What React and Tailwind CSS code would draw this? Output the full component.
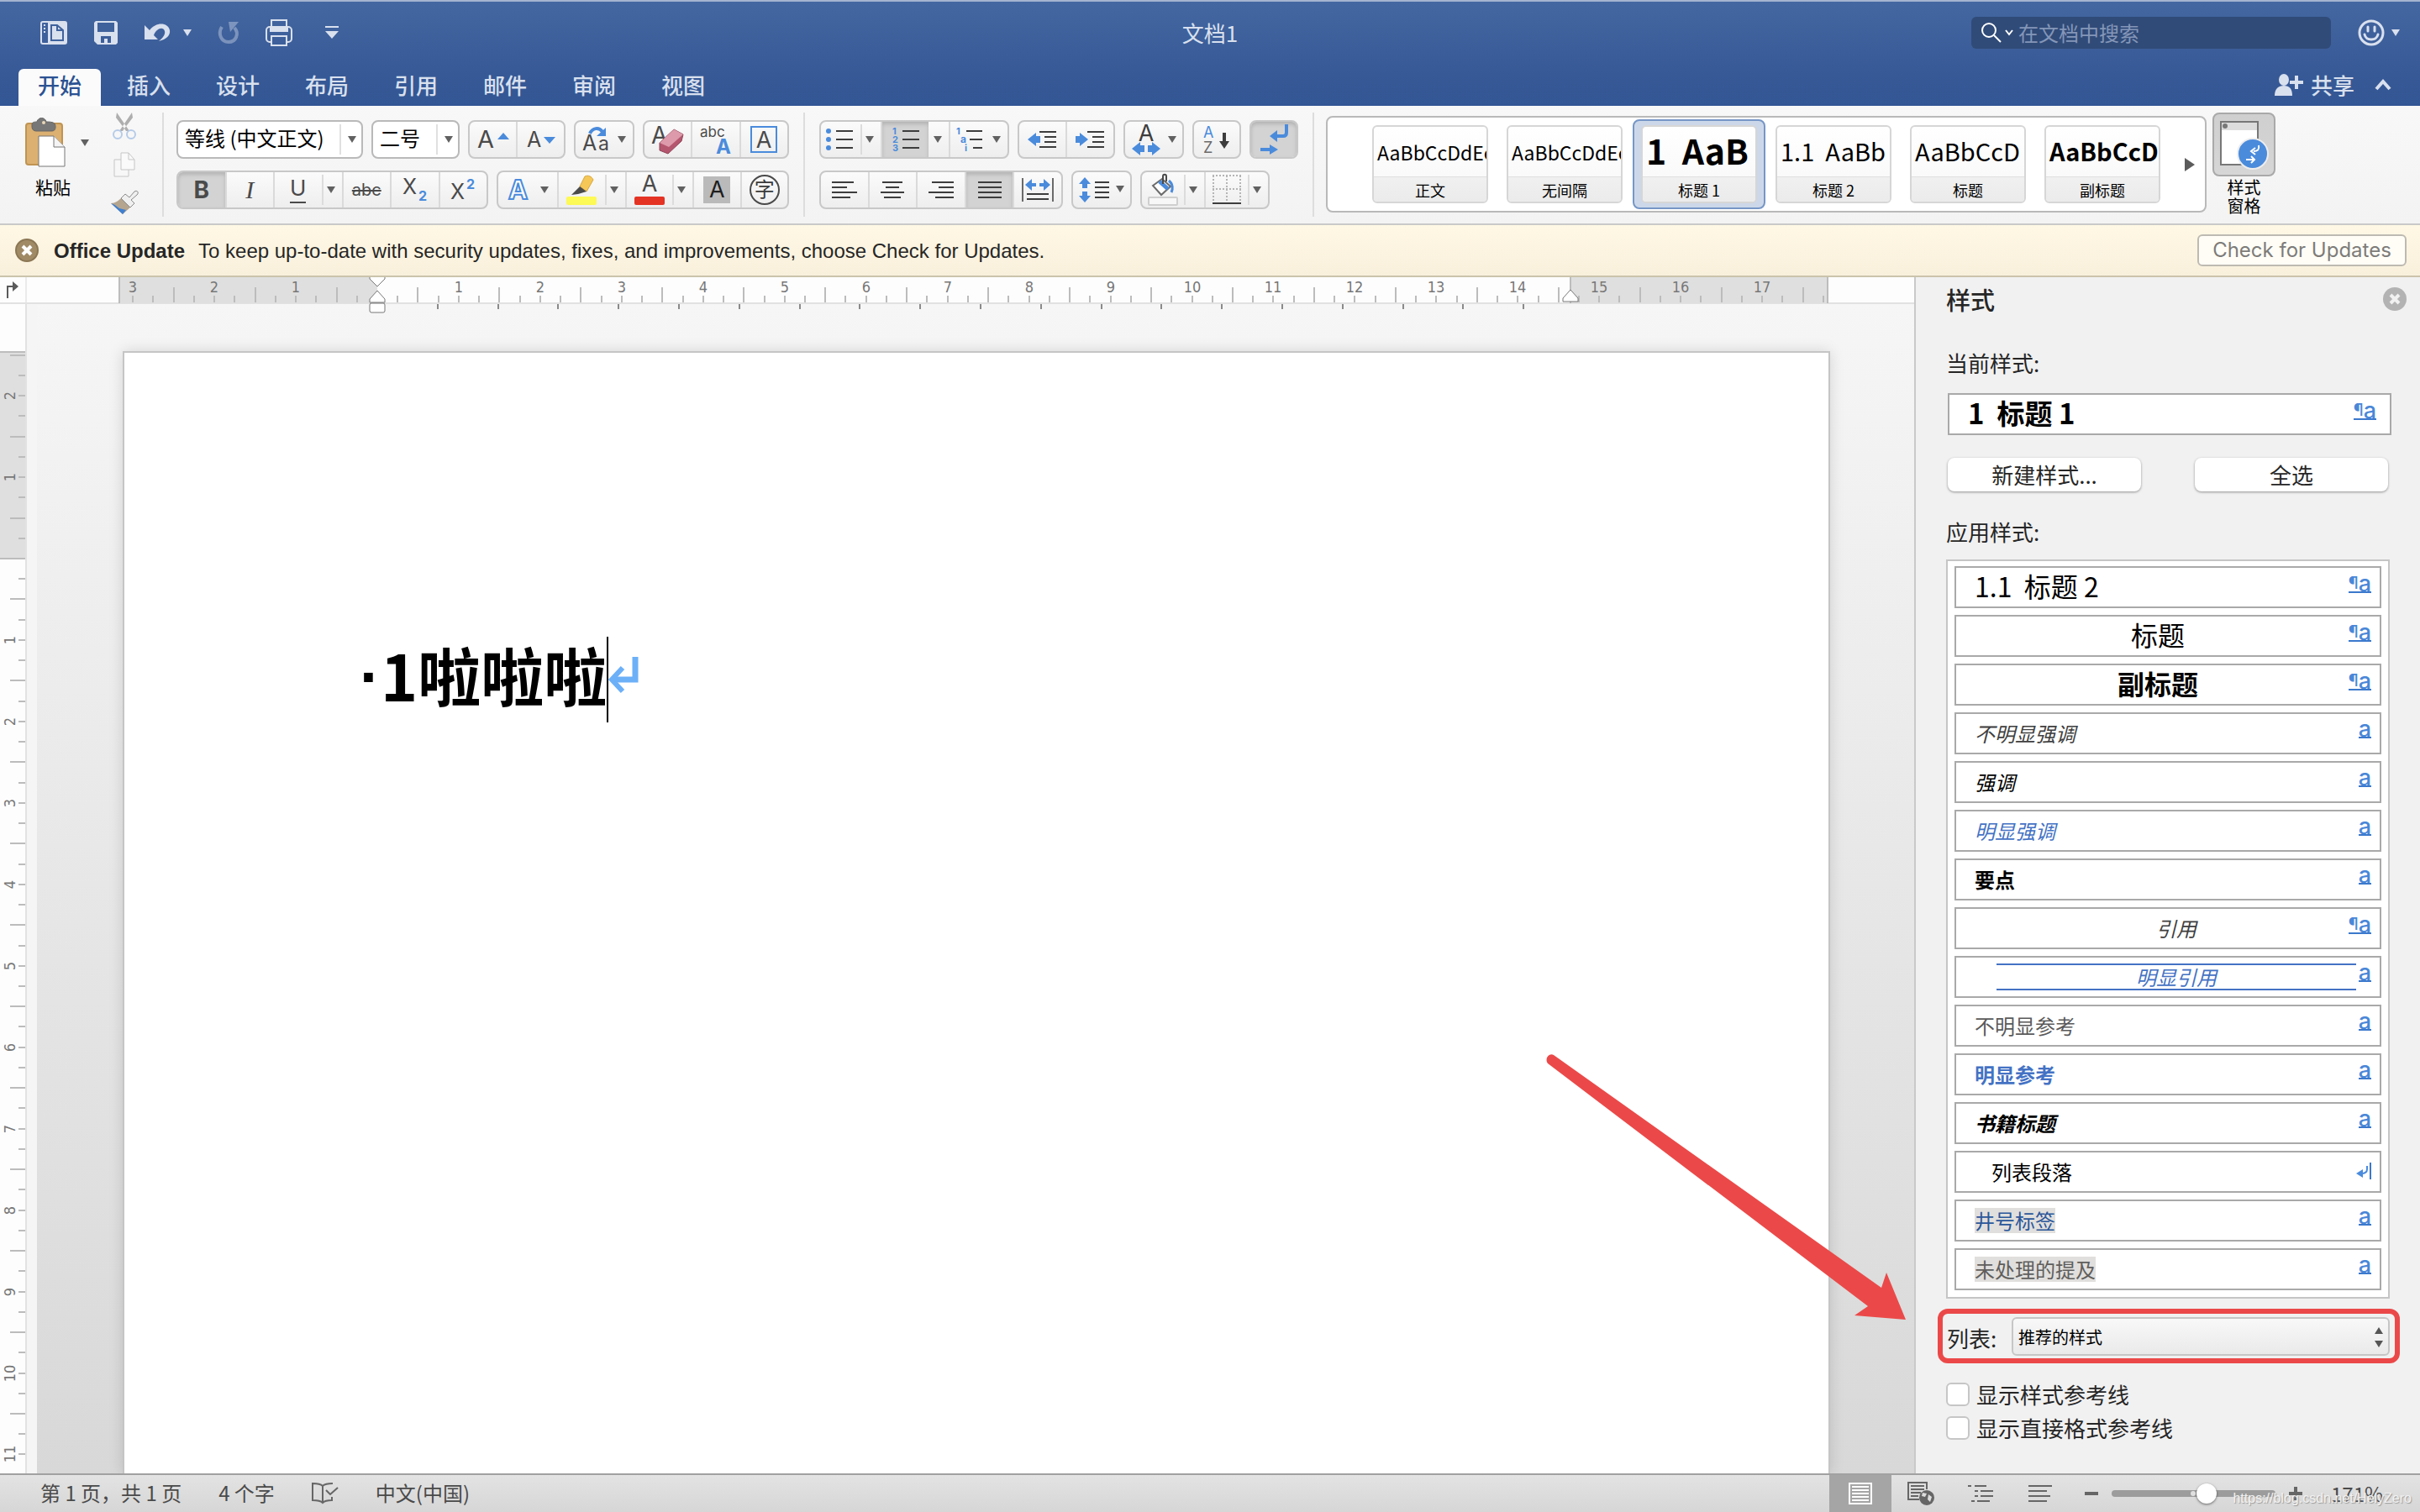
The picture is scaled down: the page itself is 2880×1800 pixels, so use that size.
import React, { useState } from 'react';

const CM = 96.95;

const tabs = ['开始', '插入', '设计', '布局', '引用', '邮件', '审阅', '视图'];

const gallery = [
    { label: '正文', sample: 'AaBbCcDdEe', cls: 'text-[23px]' },
    { label: '无间隔', sample: 'AaBbCcDdEe', cls: 'text-[23px]' },
    { label: '标题 1', sample: '1  AaB', cls: 'text-[41px] font-bold pb-1.5' },
    { label: '标题 2', sample: '1.1  AaBb', cls: 'text-[29px] pb-1' },
    { label: '标题', sample: 'AaBbCcD', cls: 'text-[29px] pb-1' },
    { label: '副标题', sample: 'AaBbCcD', cls: 'text-[29px] font-bold pb-1' },
];

const styleList = [
    { name: '1.1  标题 2', cls: 'text-[32px] mb-1', mark: 'both' },
    { name: '标题', cls: 'text-[32px] mb-1', row: 'justify-center', mark: 'both' },
    { name: '副标题', cls: 'text-[32px] mb-1 font-bold', row: 'justify-center', mark: 'both' },
    { name: '不明显强调', cls: 'text-2xl italic text-[#404040]', mark: 'char' },
    { name: '强调', cls: 'text-2xl italic', mark: 'char' },
    { name: '明显强调', cls: 'text-2xl italic text-[#4472c4]', mark: 'char' },
    { name: '要点', cls: 'text-2xl font-bold', mark: 'char' },
    { name: '引用', cls: 'text-2xl italic text-[#404040]', row: 'justify-center ml-12 mr-1', mark: 'both' },
    { name: '明显引用', cls: 'text-2xl italic text-[#4472c4]', row: 'justify-center ml-12 mr-1 border-y-2 border-[#4472c4]', mark: 'char' },
    { name: '不明显参考', cls: 'text-2xl text-[#5a5a5a]', mark: 'char' },
    { name: '明显参考', cls: 'text-2xl font-bold text-[#4472c4]', mark: 'char' },
    { name: '书籍标题', cls: 'text-2xl font-bold italic', mark: 'char' },
    { name: '列表段落', cls: 'text-2xl', row: 'pl-[42px]', mark: 'para' },
    { name: '井号标签', cls: 'text-2xl text-[#2b579a] bg-[#e1dfdd]', mark: 'char' },
    { name: '未处理的提及', cls: 'text-2xl text-[#605e5c] bg-[#e1dfdd]', mark: 'char' },
];

const Caret = ({ color = '#616161' }) => (
    <svg width="10" height="8" viewBox="0 0 10 8" aria-hidden="true">
        <path d="M0 0H10L5 8Z" fill={color} />
    </svg>
);

const Group = ({ width, children }) => (
    <div className={`flex h-[46px] shrink-0 rounded-lg border-2 border-[#c8c8c8] bg-linear-to-b from-[#fbfbfb] to-[#eeeeee] font-['Inter','Noto_Sans_CJK_SC',sans-serif] ${width}`}>
        {children}
    </div>
);

const Btn = ({ label, pressed, line = true, className = 'flex-1', children }) => (
    <button
        type="button"
        aria-label={label}
        className={`flex items-center justify-center first:rounded-l-md last:rounded-r-md ${line ? 'border-l-2 border-[#dadada] first:border-l-0' : ''} ${pressed ? 'bg-[#d3d3d3] shadow-[inset_0_3px_4px_#b4b4b4]' : ''} ${className}`}
    >
        {children}
    </button>
);

const Drop = ({ label, line = true }) => (
    <button type="button" aria-label={label} className="flex w-6 shrink-0 items-center gap-1">
        <span className={`h-9 w-0.5 ${line ? 'bg-[#dcdcdc]' : ''}`} />
        <Caret />
    </button>
);

const Icon = ({ w, h, children }) => (
    <svg width={w} height={h} viewBox={`0 0 ${w} ${h}`} fill="none" className="shrink-0 overflow-visible" aria-hidden="true">
        {children}
    </svg>
);

const Lines = ({ rows, color = '#3d3d3d' }) => (
    <path d={rows.map(([x1, x2, y]) => `M${x1} ${y}H${x2}`).join('')} stroke={color} strokeWidth="2" />
);

const Separator = () => <div className="mt-2 h-[124px] w-0.5 shrink-0 bg-[#dddddd]" />;

const TitleBar = () => (
    <div className="grid h-[74px] grid-cols-[1fr_auto_1fr] items-center">
        <div className="flex items-center gap-8 pl-12 text-[#d9e0ee]">
            <button type="button" aria-label="文档库">
                <Icon w={32} h={28}>
                    <rect x="1" y="1" width="30" height="26" rx="2" stroke="currentColor" strokeWidth="2" />
                    <path d="M9 1H31V27H9Z" fill="currentColor" />
                    <path d="M13 5H20L27 11V23H13Z" stroke="#3f629d" strokeWidth="2" />
                    <path d="M20 5V11H27" stroke="#3f629d" strokeWidth="2" />
                    <path d="M4 5H6M4 9H6M4 13H6" stroke="currentColor" strokeWidth="2" />
                </Icon>
            </button>
            <button type="button" aria-label="保存">
                <Icon w={28} h={28}>
                    <path d="M2 0H26L28 2V26L26 28H4L0 24V2Z" fill="currentColor" />
                    <path d="M4 2H24V13H4Z" fill="#3f619c" />
                    <path d="M8 18H20V26H16V21H12V26H8Z" fill="#3c5e9a" />
                </Icon>
            </button>
            <div className="flex items-center gap-4">
                <button type="button" aria-label="撤消">
                    <Icon w={30} h={22}>
                        <path d="M0 2V19H16L11 14C14 6 22 3 24 9C25 13 22 17 17 21C26 19 31 14 30 8C28 -2 13 -2 6 8Z" fill="currentColor" />
                    </Icon>
                </button>
                <button type="button" aria-label="撤消选项"><Caret color="#d9e0ee" /></button>
            </div>
            <button type="button" aria-label="重复" className="opacity-40">
                <Icon w={24} h={26}>
                    <path d="M4 6C-1 14 3 24 12 24C21 24 25 14 19 7" stroke="currentColor" strokeWidth="4" />
                    <path d="M12 0H24L14 12Z" fill="currentColor" />
                </Icon>
            </button>
            <button type="button" aria-label="打印">
                <Icon w={32} h={32}>
                    <path d="M7 10V1H25V10" stroke="currentColor" strokeWidth="2" />
                    <path d="M5 9H27V15H5Z" fill="currentColor" />
                    <rect x="1" y="9" width="30" height="18" rx="4" stroke="currentColor" strokeWidth="2" />
                    <rect x="7" y="20" width="18" height="11" fill="#3d5f9b" stroke="currentColor" strokeWidth="2" />
                </Icon>
            </button>
            <button type="button" aria-label="自定义快速访问工具栏">
                <Icon w={30} h={16}>
                    <path d="M7 0H23V2H7ZM7 6H23L15 15Z" fill="currentColor" />
                </Icon>
            </button>
        </div>
        <h1 className="text-[26px] leading-8 text-[#d9e0ee]">文档1</h1>
        <div className="flex items-center justify-end pr-6">
            <label className="flex h-[38px] w-[428px] items-center gap-1 rounded-md bg-[#304b78] pl-3">
                <Icon w={24} h={24}>
                    <circle cx="9" cy="9" r="8" stroke="#fff" strokeWidth="2" />
                    <path d="M15 15L23 23" stroke="#fff" strokeWidth="2" />
                </Icon>
                <Icon w={10} h={8}>
                    <path d="M1 1L5 6L9 1" stroke="#fff" strokeWidth="2" />
                </Icon>
                <input
                    type="text"
                    aria-label="在文档中搜索"
                    placeholder="在文档中搜索"
                    className="ml-0.5 min-w-0 flex-1 bg-transparent text-2xl leading-8 text-white outline-none placeholder:text-[#8496b8]"
                />
            </label>
            <button type="button" aria-label="反馈" className="ml-8 flex items-center gap-2">
                <Icon w={32} h={32}>
                    <circle cx="16" cy="16" r="14" stroke="#d9e0ee" strokeWidth="3" />
                    <path d="M12 9V14M20 9V14" stroke="#d9e0ee" strokeWidth="3" strokeLinecap="round" />
                    <path d="M8 18C10 26 22 26 24 18" stroke="#d9e0ee" strokeWidth="3" strokeLinecap="round" />
                </Icon>
                <Caret color="#d9e0ee" />
            </button>
        </div>
    </div>
);

const TabBar = ({ active, onChange }) => (
    <div className="mt-1.5 flex h-11 items-center pr-[34px] pl-[22px]">
        <nav className="flex h-full gap-2">
            {tabs.map(tab => (
                <button
                    key={tab}
                    type="button"
                    onClick={() => onChange(tab)}
                    className={`w-[98px] rounded-t-md pb-1.5 text-[26px] leading-8 font-medium ${tab === active ? 'bg-[#fbfbfb] text-[#2b5292]' : 'text-[#d9e0ee]'}`}
                >
                    {tab}
                </button>
            ))}
        </nav>
        <button type="button" className="mb-1.5 ml-auto flex items-center gap-2 text-[26px] leading-8 font-medium text-[#d9e0ee]">
            <Icon w={35} h={26}>
                <ellipse cx="11" cy="7" rx="6" ry="7" fill="currentColor" />
                <path d="M0 26C0 18 4 14 11 14C18 14 21 18 21 26Z" fill="currentColor" />
                <path d="M26 2V18M18 10H34" stroke="currentColor" strokeWidth="4" />
            </Icon>
            共享
        </button>
        <button type="button" aria-label="折叠功能区" className="mb-1.5 ml-6">
            <Icon w={20} h={14}>
                <path d="M2 12L10 3L18 12" stroke="#d9e0ee" strokeWidth="4" />
            </Icon>
        </button>
    </div>
);

const Clipboard = () => (
    <div className="flex shrink-0">
        <button type="button" className="mt-3.5 ml-[30px] block w-[78px] self-start text-left">
            <span className="flex items-center gap-[18px]">
                <Icon w={48} h={59}>
                    <rect x="1" y="7" width="43" height="49" rx="3" fill="#dbb071" stroke="#bf9452" strokeWidth="2" />
                    <path d="M8 8C8 6 10 5 14 5C15 -1 24 -1 25 5C33 5 36 6 36 11C36 15 34 16 31 16H13C10 16 8 14 8 11Z" fill="#777" stroke="#666" />
                    <circle cx="22" cy="6" r="2" fill="#e8d6b8" />
                    <path d="M16 22H34L47 35V58H16Z" fill="#fff" stroke="#777" strokeWidth="1" />
                    <path d="M34 22V35H47" fill="#f4f4f4" stroke="#777" strokeWidth="1" />
                </Icon>
                <Caret />
            </span>
            <span className="mt-3 block pl-3 text-[21px] leading-[22px]">粘贴</span>
        </button>
        <div className="mt-2 ml-6 flex w-8 flex-col items-center gap-4">
            <button type="button" aria-label="剪切">
                <Icon w={28} h={31}>
                    <path d="M5 0L20 22H16L14 19L4 6ZM23 0L8 22H12L14 19L24 6Z" fill="#aeaeae" />
                    <circle cx="6" cy="26" r="5" stroke="#b5cbe8" strokeWidth="2" />
                    <circle cx="22" cy="26" r="5" stroke="#b5cbe8" strokeWidth="2" />
                </Icon>
            </button>
            <button type="button" aria-label="复制">
                <Icon w={26} h={30}>
                    <path d="M1 9H12L18 15V29H1Z" fill="#f7f7f7" stroke="#c6c6c6" />
                    <path d="M9 1H18L25 9V21H9Z" fill="#fafafa" stroke="#c6c6c6" />
                    <path d="M18 1V9H25" stroke="#c6c6c6" />
                </Icon>
            </button>
            <button type="button" aria-label="格式刷">
                <Icon w={32} h={28}>
                    <path d="M0 15C5 15 9 12 13 8L24 19L14 28Z" fill="#b5a58f" />
                    <path d="M0 15C4 16 6 18 10 21L18 23L14 28Z" fill="#3f7fd0" />
                    <path d="M12 9L17 4L22 8L28 1C31 -1 34 2 31 5L24 11L28 15L23 20Z" fill="#efefef" stroke="#8a8a8a" />
                </Icon>
            </button>
        </div>
    </div>
);

const FontPanel = () => (
    <div className="flex shrink-0 flex-col gap-3.5 pt-[17px]">
        <div className="flex gap-2.5">
            <button type="button" className="flex h-[46px] w-[222px] items-center rounded-lg border-2 border-[#b9b9b9] bg-white pl-2 text-2xl leading-8">
                <span className="mb-1 flex-1 text-left whitespace-nowrap">等线 (中文正文)</span>
                <span className="mr-2 h-9 w-0.5 bg-[#e0e0e0]" />
                <span className="mr-1.5"><Caret /></span>
            </button>
            <button type="button" className="flex h-[46px] w-[105px] items-center rounded-lg border-2 border-[#b9b9b9] bg-white pl-2 text-2xl leading-8">
                <span className="mb-1 flex-1 text-left whitespace-nowrap">二号</span>
                <span className="mr-2 h-9 w-0.5 bg-[#e0e0e0]" />
                <span className="mr-1.5"><Caret /></span>
            </button>
            <Group width="w-[116px]">
                <Btn label="增大字号">
                    <Icon w={38} h={24}>
                        <text x="0" y="22" fontSize="29" fill="#4a4a4a">A</text>
                        <path d="M24 12L31 4L38 12Z" fill="#4a8bdc" />
                    </Icon>
                </Btn>
                <Btn label="减小字号">
                    <Icon w={34} h={24}>
                        <text x="0" y="21" fontSize="25" fill="#4a4a4a">A</text>
                        <path d="M20 9H34L27 17Z" fill="#4a8bdc" />
                    </Icon>
                </Btn>
            </Group>
            <Group width="w-[72px]">
                <Btn label="更改大小写">
                    <Icon w={52} h={32}>
                        <text x="0" y="29" fontSize="25" fill="#4a4a4a">A</text>
                        <text x="19" y="29" fontSize="23" fill="#4a4a4a">a</text>
                        <path d="M9 9C12 2 20 1 24 7" stroke="#4a8bdc" strokeWidth="4" />
                        <path d="M28 2V12H17Z" fill="#4a8bdc" />
                        <path d="M42 12H52L47 20Z" fill="#616161" />
                    </Icon>
                </Btn>
            </Group>
            <Group width="w-[174px]">
                <Btn label="清除格式">
                    <Icon w={40} h={36}>
                        <text x="0" y="23" fontSize="28" fill="#4a4a4a">A</text>
                        <path d="M10 22L27 6L38 12L36 20L20 35L10 31Z" fill="#b5566f" stroke="#8f4458" />
                        <path d="M10 22L27 6L38 12L21 27Z" fill="#dd9aaa" />
                    </Icon>
                </Btn>
                <Btn label="拼音指南">
                    <Icon w={38} h={36}>
                        <text x="0" y="15" fontSize="17" fill="#4a4a4a">abc</text>
                        <text x="19" y="35" fontSize="24" fontWeight="bold" fill="#4a8bdc">A</text>
                    </Icon>
                </Btn>
                <Btn label="字符边框">
                    <Icon w={32} h={32}>
                        <rect x="1" y="1" width="30" height="30" stroke="#4a8bdc" strokeWidth="2" />
                        <text x="16" y="26" fontSize="27" textAnchor="middle" fill="#4a4a4a">A</text>
                    </Icon>
                </Btn>
            </Group>
        </div>
        <div className="flex gap-2.5">
            <Group width="w-[371px]">
                <Btn label="加粗" pressed><span className="text-[28px] leading-8 font-bold text-[#4a4a4a]">B</span></Btn>
                <Btn label="倾斜"><span className="font-['Liberation_Serif',serif] text-3xl leading-8 text-[#4a4a4a] italic">I</span></Btn>
                <Btn label="下划线">
                    <span className="flex h-8 items-start border-b-2 border-[#4a4a4a] text-[26px] leading-7 text-[#4a4a4a]">U</span>
                </Btn>
                <Drop label="下划线选项" />
                <Btn label="删除线"><span className="text-xl leading-8 text-[#4a4a4a] line-through">abc</span></Btn>
                <Btn label="下标">
                    <Icon w={30} h={30}>
                        <text x="0" y="20" fontSize="25" fill="#4a4a4a">X</text>
                        <text x="19" y="28" fontSize="16" fontWeight="bold" fill="#4a8bdc">2</text>
                    </Icon>
                </Btn>
                <Btn label="上标">
                    <Icon w={30} h={30}>
                        <text x="0" y="26" fontSize="25" fill="#4a4a4a">X</text>
                        <text x="19" y="14" fontSize="16" fontWeight="bold" fill="#4a8bdc">2</text>
                    </Icon>
                </Btn>
            </Group>
            <Group width="w-[348px]">
                <Btn label="文本效果" className="w-[70px]">
                    <Icon w={50} h={28}>
                        <text x="2" y="25" fontSize="31" fontWeight="bold" fill="#fff" stroke="#4a8bdc" strokeWidth="2">A</text>
                        <path d="M40 10H50L45 18Z" fill="#616161" />
                    </Icon>
                </Btn>
                <Btn label="突出显示">
                    <Icon w={36} h={36}>
                        <path d="M16 14L22 2C26 0 30 2 32 6L24 20Z" fill="#f4c757" stroke="#d8a63c" />
                        <path d="M16 14L24 20L14 23L6 24Z" fill="#4a4a4a" />
                        <rect x="0" y="26" width="36" height="10" rx="2" fill="#fdf955" />
                    </Icon>
                </Btn>
                <Drop label="突出显示颜色" />
                <Btn label="字体颜色">
                    <Icon w={36} h={36}>
                        <text x="18" y="20" fontSize="27" textAnchor="middle" fill="#4a4a4a">A</text>
                        <rect x="0" y="26" width="36" height="10" rx="2" fill="#e43223" />
                    </Icon>
                </Btn>
                <Drop label="字体颜色选项" />
                <Btn label="字符底纹"><span className="flex size-8 items-center justify-center bg-[#bababa] text-[27px] leading-8 text-[#1e1e1e]">A</span></Btn>
                <Btn label="带圈字符"><span className="flex size-9 items-center justify-center rounded-full border-2 border-[#4a4a4a] text-2xl leading-8 text-[#3a3a3a]">字</span></Btn>
            </Group>
        </div>
    </div>
);

const arrowLeft = 'M0 8L10 0V4H15V12H10V16Z';
const arrowRight = 'M15 8L5 0V4H0V12H5V16Z';

const ParagraphPanel = () => (
    <div className="flex shrink-0 flex-col gap-3.5 pt-[17px]">
        <div className="flex gap-2.5">
            <Group width="w-[226px]">
                <Btn label="项目符号">
                    <Icon w={36} h={28}>
                        <circle cx="3" cy="4" r="3" fill="#4a8bdc" />
                        <circle cx="3" cy="14" r="3" fill="#4a8bdc" />
                        <circle cx="3" cy="24" r="3" fill="#4a8bdc" />
                        <Lines rows={[[12, 32, 4], [12, 32, 14], [12, 32, 24]]} />
                    </Icon>
                </Btn>
                <Drop label="项目符号库" />
                <Btn label="编号" pressed className="w-[57px]">
                    <Icon w={32} h={28}>
                        <text x="0" y="8" fontSize="11" fontWeight="bold" fill="#4a8bdc">1</text>
                        <text x="0" y="18" fontSize="11" fontWeight="bold" fill="#4a8bdc">2</text>
                        <text x="0" y="28" fontSize="11" fontWeight="bold" fill="#4a8bdc">3</text>
                        <Lines rows={[[12, 32, 4], [12, 32, 14], [12, 32, 24]]} />
                    </Icon>
                </Btn>
                <Drop label="编号库" line={false} />
                <Btn label="多级列表" className="w-[70px]">
                    <Icon w={54} h={28}>
                        <text x="0" y="8" fontSize="11" fontWeight="bold" fill="#4a8bdc">1</text>
                        <text x="5" y="18" fontSize="12" fontWeight="bold" fill="#4a8bdc">a</text>
                        <text x="10" y="28" fontSize="11" fontWeight="bold" fill="#4a8bdc">i</text>
                        <Lines rows={[[12, 31, 4], [16, 31, 14], [20, 31, 24]]} />
                        <path d="M43 10H53L48 18Z" fill="#616161" />
                    </Icon>
                </Btn>
            </Group>
            <Group width="w-[116px]">
                <Btn label="减少缩进">
                    <Icon w={36} h={22}>
                        <path d={arrowLeft} transform="translate(0 3)" fill="#4a8bdc" />
                        <Lines rows={[[14, 34, 2], [20, 34, 8], [20, 34, 14], [14, 34, 20]]} />
                    </Icon>
                </Btn>
                <Btn label="增加缩进">
                    <Icon w={36} h={22}>
                        <path d={arrowRight} transform="translate(0 3)" fill="#4a8bdc" />
                        <Lines rows={[[14, 34, 2], [20, 34, 8], [20, 34, 14], [14, 34, 20]]} />
                    </Icon>
                </Btn>
            </Group>
            <Group width="w-[72px]">
                <Btn label="中文版式">
                    <Icon w={54} h={36}>
                        <text x="18" y="20" fontSize="27" textAnchor="middle" fill="#3d3d3d">A</text>
                        <path d={arrowLeft} transform="translate(1 21)" fill="#4a8bdc" />
                        <path d={arrowRight} transform="translate(20 21)" fill="#4a8bdc" />
                        <path d="M44 14H54L49 22Z" fill="#616161" />
                    </Icon>
                </Btn>
            </Group>
            <Group width="w-[58px]">
                <Btn label="排序">
                    <Icon w={32} h={34}>
                        <text x="0" y="15" fontSize="18" fill="#4a8bdc">A</text>
                        <text x="0" y="33" fontSize="18" fill="#6a6a6a">Z</text>
                        <path d="M25 9V22" stroke="#3d3d3d" strokeWidth="4" />
                        <path d="M19 19H31L25 28Z" fill="#3d3d3d" />
                    </Icon>
                </Btn>
            </Group>
            <Group width="w-[58px]">
                <Btn label="显示编辑标记" pressed>
                    <Icon w={34} h={36}>
                        <path d="M32 0V10Q32 14 28 14H21" stroke="#4a8bdc" strokeWidth="4" />
                        <path d="M12 14L21 7V21Z" fill="#4a8bdc" />
                        <path d="M1 30H12" stroke="#4a8bdc" strokeWidth="4" />
                        <path d="M22 30L12 24V36Z" fill="#4a8bdc" />
                    </Icon>
                </Btn>
            </Group>
        </div>
        <div className="flex gap-2.5">
            <Group width="w-[290px]">
                <Btn label="左对齐">
                    <Icon w={30} h={22}><Lines rows={[[0, 26, 2], [0, 18, 8], [0, 30, 14], [0, 22, 20]]} /></Icon>
                </Btn>
                <Btn label="居中">
                    <Icon w={28} h={22}><Lines rows={[[2, 26, 2], [6, 22, 8], [0, 28, 14], [4, 24, 20]]} /></Icon>
                </Btn>
                <Btn label="右对齐">
                    <Icon w={30} h={22}><Lines rows={[[4, 30, 2], [12, 30, 8], [0, 30, 14], [8, 30, 20]]} /></Icon>
                </Btn>
                <Btn label="两端对齐" pressed>
                    <Icon w={28} h={22}><Lines rows={[[0, 28, 2], [0, 28, 8], [0, 28, 14], [0, 28, 20]]} /></Icon>
                </Btn>
                <Btn label="分散对齐">
                    <Icon w={38} h={28}>
                        <path d="M1 0V28M37 0V28" stroke="#6a6a6a" strokeWidth="2" />
                        <path d="M4 8L12 1V6H17V10H12V15ZM34 8L26 1V6H21V10H26V15Z" fill="#4a8bdc" />
                        <Lines rows={[[6, 32, 19], [6, 32, 25]]} />
                    </Icon>
                </Btn>
            </Group>
            <Group width="w-[72px]">
                <Btn label="行距">
                    <Icon w={54} h={30}>
                        <path d="M7 0L14 8H10V13H4V8H0ZM7 30L14 22H10V17H4V22H0Z" fill="#4a8bdc" />
                        <Lines rows={[[19, 36, 6], [19, 36, 12], [19, 36, 18], [19, 36, 24]]} />
                        <path d="M44 10H54L49 18Z" fill="#616161" />
                    </Icon>
                </Btn>
            </Group>
            <Group width="w-[154px]">
                <Btn label="底纹">
                    <Icon w={36} h={38}>
                        <path d="M6 14L17 6L27 15L16 25Z" fill="#fff" stroke="#6a6a6a" strokeWidth="2" />
                        <path d="M14 9L24 18" stroke="#4a8bdc" strokeWidth="5" />
                        <path d="M18 12V3C18 0 22 0 22 3V9" stroke="#4a4a4a" strokeWidth="2" />
                        <path d="M25 8C30 12 30 18 28 22" stroke="#4a8bdc" strokeWidth="3" />
                        <rect x="1" y="28" width="34" height="9" rx="1" fill="#f7f7f7" stroke="#cfcfcf" strokeWidth="2" />
                    </Icon>
                </Btn>
                <Drop label="底纹颜色" />
                <Btn label="边框">
                    <Icon w={34} h={36}>
                        <path d="M0 1H34M0 17H34M1 1V32M17 1V32M33 1V32" stroke="#b5b5b5" strokeWidth="2" strokeDasharray="2 2" />
                        <path d="M0 34H34" stroke="#3d3d3d" strokeWidth="2" />
                    </Icon>
                </Btn>
                <Drop label="边框选项" />
            </Group>
        </div>
    </div>
);

const StyleGallery = () => {
    const [selected, setSelected] = useState('标题 1');
    return (
        <div className="mt-3 flex h-[115px] w-[1048px] shrink-0 items-center gap-0.5 rounded-lg border-2 border-[#b9b9b9] bg-white pl-[43px]">
            {gallery.map(item => (
                <button
                    key={item.label}
                    type="button"
                    onClick={() => setSelected(item.label)}
                    className={`h-[107px] w-[158px] rounded-lg border-2 px-2 py-[5px] ${item.label === selected ? 'border-[#7696c6] bg-[#ccd8e9]' : 'border-transparent'}`}
                >
                    <span className="flex h-full flex-col overflow-hidden rounded-md border-2 border-[#d6d6d6] bg-linear-to-b from-white to-[#f7f7f7]">
                        <span className={`flex h-[59px] items-center overflow-hidden px-1 leading-10 whitespace-pre ${item.cls}`}>{item.sample}</span>
                        <span className="flex flex-1 items-center justify-center border-t border-[#e0e0e0] bg-linear-to-b from-[#f0f0f0] to-[#ebebeb] text-lg leading-6">{item.label}</span>
                    </span>
                </button>
            ))}
            <button type="button" aria-label="更多样式" className="ml-[17px]">
                <Icon w={12} h={16}><path d="M0 0L12 8L0 16Z" fill="#5c5c5c" /></Icon>
            </button>
        </div>
    );
};

const Ribbon = () => (
    <div className="flex h-[142px] shrink-0 items-start overflow-hidden border-b-2 border-[#c9c9c9] bg-linear-to-b from-[#f8f8f8] to-[#f3f3f3]">
        <Clipboard />
        <div className="w-[29px] shrink-0" />
        <Separator />
        <div className="w-[15px] shrink-0" />
        <FontPanel />
        <div className="w-[17px] shrink-0" />
        <Separator />
        <div className="w-[17px] shrink-0" />
        <ParagraphPanel />
        <div className="w-[17px] shrink-0" />
        <Separator />
        <div className="w-[14px] shrink-0" />
        <StyleGallery />
        <button type="button" className="mt-2 ml-[7px] flex shrink-0 flex-col items-center">
            <span className="flex h-[76px] w-[75px] items-center justify-center rounded-lg border-2 border-[#a9a9a9] bg-linear-to-b from-[#cfcfcf] to-[#d6d6d6]">
                <Icon w={57} h={57}>
                    <path d="M1 1H45V30L30 52H1Z" fill="#fff" stroke="#777" strokeWidth="2" />
                    <path d="M2 2H44V11H2Z" fill="#dcdcdc" />
                    <circle cx="6" cy="6" r="3" fill="#777" />
                    <circle cx="39" cy="39" r="18" fill="#4a8bdc" stroke="#ededed" strokeWidth="2" />
                    <path d="M46 29C47 34 45 36 40 36M42 32L37 36L42 40" stroke="#fff" strokeWidth="2" />
                    <path d="M31 46H40M37 42L41 46L37 50" stroke="#fff" strokeWidth="2" />
                </Icon>
            </span>
            <span className="mt-0.5 text-xl leading-[22px]">样式<br />窗格</span>
        </button>
    </div>
);

const UpdateBar = () => (
    <div className="flex h-[62px] shrink-0 items-center border-b-2 border-[#cbc3ab] bg-linear-to-b from-[#fff8e5] to-[#f9f0dc] pr-4 pl-[18px] font-['Liberation_Sans',sans-serif] text-2xl leading-8 text-[#262626]">
        <button type="button" aria-label="关闭">
            <Icon w={28} h={28}>
                <circle cx="14" cy="14" r="13" fill="#a08a66" stroke="#8b7654" strokeWidth="2" />
                <path d="M9 9L19 19M19 9L9 19" stroke="#fff" strokeWidth="4" />
            </Icon>
        </button>
        <strong className="mt-0.5 ml-[18px]">Office Update</strong>
        <span className="mt-0.5 ml-4">To keep up-to-date with security updates, fixes, and improvements, choose Check for Updates.</span>
        <button type="button" className="ml-auto h-[38px] w-[249px] rounded-md border-2 border-[#bdbab2] bg-[#fffdf6] font-['Inter',sans-serif] text-[#7d7c79]">
            Check for Updates
        </button>
    </div>
);

const quarterTicks = (from, to) => {
    const ticks = [];
    for (let q = from; q <= to; q++) {
        if (q !== 0) ticks.push(q);
    }
    return ticks;
};

const HorizontalRuler = () => {
    const zero = 417;
    return (
        <div className="relative z-10 flex h-8 shrink-0 border-b-2 border-[#e2e2e2] bg-[#fdfdfd]">
            <button type="button" aria-label="制表符" className="flex w-8 items-center justify-center border-r-2 border-[#ebebeb]">
                <Icon w={14} h={20}>
                    <path d="M1 20V6H8" stroke="#5a5a5a" strokeWidth="2" />
                    <path d="M7 0L14 6L7 12Z" fill="#5a5a5a" />
                </Icon>
            </button>
            <svg className="h-8 flex-1 overflow-visible font-['DejaVu_Sans_Condensed','DejaVu_Sans',sans-serif]" aria-hidden="true">
                <rect x="109" y="0" width="308" height="31" fill="#dfdfdf" />
                <rect x="1836" y="0" width="307" height="31" fill="#dfdfdf" />
                <path d="M110 0V31M1837 0V31M2143 0V31" stroke="#bdbdbd" strokeWidth="2" />
                {quarterTicks(-12, 71).map(q => {
                    const x = Math.round(zero + (q * CM) / 4);
                    const long = Math.abs(q % 4) === 2;
                    return <path key={q} d={`M${x} ${long ? 12 : 22}V30`} stroke="#bcbcbc" strokeWidth="2" />;
                })}
                {quarterTicks(-3, 17).map(n => (
                    <text key={n} x={Math.round(zero + n * CM)} y="18" fontSize="18" textAnchor="middle" fill="#777">{Math.abs(n)}</text>
                ))}
                {quarterTicks(1, 19).map(n => (
                    <path key={n} d={`M${Math.round(zero + n * 71.8)} 32V38`} stroke="#8a8a8a" strokeWidth="2" />
                ))}
                <path d="M408 0V2L417 11L426 2V0" fill="#fff" stroke="#777" />
                <path d="M417 16L426 26V30H408V26Z" fill="#fff" stroke="#777" />
                <rect x="408" y="31" width="18" height="11" rx="2" fill="#fff" stroke="#777" />
                <path d="M1837 15L1846 25V29H1828V25Z" fill="#fff" stroke="#777" />
            </svg>
        </div>
    );
};

const VerticalRuler = () => {
    const zero = 303;
    return (
        <div className="w-8 shrink-0 overflow-hidden border-r-2 border-[#e2e2e2] bg-[#fdfdfd]">
            <svg width="30" height="100%" className="font-['DejaVu_Sans_Condensed','DejaVu_Sans',sans-serif]" aria-hidden="true">
                <rect x="0" y="56" width="30" height="247" fill="#dfdfdf" />
                <path d="M0 57H30M0 303H30" stroke="#bdbdbd" strokeWidth="2" />
                {quarterTicks(-10, 57).map(q => {
                    const y = Math.round(zero + (q * CM) / 4);
                    const long = Math.abs(q % 4) === 2;
                    return <path key={q} d={`M${long ? 12 : 22} ${y}H30`} stroke="#bcbcbc" strokeWidth="2" />;
                })}
                {quarterTicks(-2, 14).map(n => (
                    <text key={n} transform={`translate(18 ${Math.round(zero + n * CM)}) rotate(-90)`} fontSize="18" textAnchor="middle" fill="#777">{Math.abs(n)}</text>
                ))}
            </svg>
        </div>
    );
};

const DocumentArea = () => (
    <div className="flex min-w-0 flex-1 flex-col">
        <HorizontalRuler />
        <div className="flex min-h-0 flex-1">
            <VerticalRuler />
            <div className="w-3 shrink-0 bg-[#f5f5f5]" />
            <main className="flex min-w-0 flex-1 overflow-hidden bg-linear-to-b from-[#f6f6f6] to-[#d8d8d8] pt-14 pr-[100px] pl-[102px]">
                <article className="flex-1 border-2 border-b-0 border-[#c5c5c5] bg-white pt-[332px] pl-[280px] shadow-[0_0_16px_#00000022]">
                    <h2 className="flex items-center text-[75px] leading-[102px] font-bold">
                        <span className="mb-2 font-['Liberation_Sans',sans-serif]">·</span>
                        <span className="mb-3">1啦啦啦</span>
                        <span className="h-[102px] w-0.5 bg-black" />
                        <span className="mb-2.5">
                            <Icon w={36} h={44}>
                                <path d="M32 0V27H6" stroke="#6cb0f8" strokeWidth="7" />
                                <path d="M17 13L4 27L17 41" stroke="#6cb0f8" strokeWidth="6" />
                            </Icon>
                        </span>
                    </h2>
                </article>
            </main>
        </div>
    </div>
);

const StyleMark = ({ type }) => {
    if (type === 'para') {
        return (
            <Icon w={18} h={20}>
                <path d="M17 4V24" stroke="#3b78cc" strokeWidth="2" />
                <path d="M13 8V12Q13 17 6 17" stroke="#4a8bdc" strokeWidth="2" />
                <path d="M0 17L8 12V22Z" fill="#4a8bdc" />
            </Icon>
        );
    }
    return (
        <span className="flex items-end border-b-2 border-[#3b78cc] font-['Inter',sans-serif] font-medium text-[#4a87d8]">
            {type === 'both' && <span className="text-xl leading-5">¶</span>}
            <span className="text-[27px] leading-[19px]">a</span>
        </span>
    );
};

const StylesPane = () => (
    <aside className="flex w-[602px] shrink-0 flex-col border-l-2 border-[#c9c9c9] bg-[#f1f1f1] pr-6 pl-[26px] text-[26px] leading-8 text-[#262626]">
        <div className="flex items-center justify-between pt-2 pl-2.5">
            <h2 className="text-[29px] leading-9 font-medium">样式</h2>
            <button type="button" aria-label="关闭窗格" className="-mr-2">
                <Icon w={28} h={28}>
                    <circle cx="14" cy="14" r="14" fill="#b3b3b3" />
                    <path d="M9 9L19 19M19 9L9 19" stroke="#f1f1f1" strokeWidth="4" />
                </Icon>
            </button>
        </div>
        <p className="mt-[42px] pl-2.5">当前样式:</p>
        <div className="mt-5 ml-3 flex h-[50px] w-[528px] items-center justify-between border-2 border-[#a9a9a9] bg-white pr-4 pl-[22px] text-black">
            <span className="mb-1 text-[33px] leading-[44px] font-bold whitespace-pre">1  标题 1</span>
            <span className="mb-2"><StyleMark type="both" /></span>
        </div>
        <div className="mt-[27px] flex justify-between pr-3.5 pl-3">
            <button type="button" className="h-10 w-[230px] rounded-lg bg-white shadow-[0_1px_3px_#00000066]">新建样式...</button>
            <button type="button" className="h-10 w-[230px] rounded-lg bg-white shadow-[0_1px_3px_#00000066]">全选</button>
        </div>
        <p className="mt-8 pl-2.5">应用样式:</p>
        <ul className="mt-[17px] ml-2.5 flex w-[528px] flex-col gap-2 border-2 border-[#c5c5c5] bg-white p-2 pt-1.5 text-black">
            {styleList.map(item => (
                <li key={item.name}>
                    <button type="button" className="relative flex h-[50px] w-full items-center border-2 border-[#a9a9a9] pr-6 text-left">
                        <span className={`flex h-8 flex-1 items-center leading-8 ${item.row || 'pl-[22px]'}`}>
                            <span className={`whitespace-pre ${item.cls} leading-[30px]`}>{item.name}</span>
                        </span>
                        <span className="absolute top-2 right-2.5"><StyleMark type={item.mark} /></span>
                    </button>
                </li>
            ))}
        </ul>
        <div className="mt-3 flex h-[65px] w-[550px] items-center rounded-xl border-6 border-[#eb4949] pr-1.5 pl-[5px]">
            <label htmlFor="style-filter" className="w-[77px] pt-1">列表:</label>
            <div className="relative flex-1">
                <select
                    id="style-filter"
                    className="h-[46px] w-full appearance-none rounded-md border-2 border-[#c6c6c6] bg-linear-to-b from-[#f8f8f8] to-[#eaeaea] pt-0.5 pl-1.5 text-xl text-black"
                >
                    <option>推荐的样式</option>
                </select>
                <span className="pointer-events-none absolute top-3 right-2">
                    <Icon w={10} h={24}>
                        <path d="M0 8L5 0L10 8ZM0 16H10L5 24Z" fill="#555" />
                    </Icon>
                </span>
            </div>
        </div>
        <div className="mt-[21px] flex flex-col gap-2 pl-2.5">
            {['显示样式参考线', '显示直接格式参考线'].map(text => (
                <label key={text} className="flex items-center gap-2">
                    <input type="checkbox" className="size-7 appearance-none rounded-md border-2 border-[#c6c6c6] bg-white checked:bg-[#4a8bdc]" />
                    {text}
                </label>
            ))}
        </div>
    </aside>
);

const StatusBar = () => (
    <footer className="relative flex h-[46px] shrink-0 items-center border-t-2 border-[#a1a1a1] bg-linear-to-b from-[#e3e3e3] to-[#d6d6d6] pr-[49px] pl-12 text-2xl leading-8 text-[#4a4a4a]">
        <span className="mb-0.5">第 1 页，共 1 页</span>
        <span className="mb-0.5 ml-11">4 个字</span>
        <button type="button" aria-label="校对" className="mb-0.5 ml-11">
            <Icon w={32} h={26}>
                <path d="M13 5C10 2 6 2 1 2V22C6 22 10 22 13 25C16 22 20 22 24 22V18M13 5C16 2 20 2 25 2M13 5V24" stroke="#666" strokeWidth="2" />
                <path d="M17 10L22 15L31 7" stroke="#666" strokeWidth="2" />
            </Icon>
        </button>
        <span className="mb-0.5 ml-11">中文(中国)</span>
        <div className="ml-auto flex h-full items-center">
            <button type="button" aria-label="页面视图" className="flex h-full w-[74px] items-center justify-center bg-[#a5a5a5]">
                <Icon w={28} h={26}>
                    <rect x="1" y="1" width="26" height="24" stroke="#fff" strokeWidth="2" />
                    <Lines rows={[[4, 24, 5], [4, 24, 9], [4, 24, 13], [4, 24, 17], [4, 24, 21]]} color="#fff" />
                </Icon>
            </button>
            <button type="button" aria-label="Web 版式" className="flex h-full w-[70px] items-center justify-center">
                <Icon w={33} h={28}>
                    <path d="M14 21H1V1H23V9" stroke="#666" strokeWidth="2" />
                    <Lines rows={[[4, 20, 5], [4, 20, 9], [4, 16, 13], [4, 13, 17]]} color="#666" />
                    <circle cx="23" cy="19" r="9" fill="#666" />
                    <path d="M18 13L23 14L21 18L17 17ZM25 15L29 18L27 24L24 21Z" fill="#ddd" />
                </Icon>
            </button>
            <button type="button" aria-label="大纲" className="flex h-full w-[72px] items-center justify-center">
                <Icon w={30} h={22}>
                    <Lines rows={[[0, 4, 2], [8, 22, 2], [8, 12, 8], [15, 30, 8], [8, 12, 14], [15, 30, 14], [4, 8, 20], [11, 26, 20]]} color="#666" />
                </Icon>
            </button>
            <button type="button" aria-label="草稿" className="flex h-full w-[70px] items-center justify-center">
                <Icon w={28} h={22}>
                    <Lines rows={[[0, 28, 2], [0, 22, 8], [0, 26, 14], [0, 22, 20]]} color="#666" />
                </Icon>
            </button>
            <button type="button" aria-label="缩小" className="ml-[18px]">
                <Icon w={16} h={16}><path d="M0 8H16" stroke="#666" strokeWidth="4" /></Icon>
            </button>
            <div className="relative mx-4 flex items-center">
                <input
                    type="range"
                    aria-label="缩放"
                    defaultValue="59"
                    className="h-2 w-[195px] appearance-none rounded-full bg-[#9c9c9c] [&::-webkit-slider-thumb]:size-6 [&::-webkit-slider-thumb]:appearance-none [&::-webkit-slider-thumb]:rounded-full [&::-webkit-slider-thumb]:bg-white [&::-webkit-slider-thumb]:shadow-[0_1px_3px_#00000088]"
                />
                <span className="absolute left-[94px] size-1.5 rounded-full bg-[#e0e0e0]" />
            </div>
            <button type="button" aria-label="放大">
                <Icon w={16} h={16}><path d="M0 8H16M8 0V16" stroke="#666" strokeWidth="4" /></Icon>
            </button>
            <span className="ml-[34px] w-[57px]">171%</span>
        </div>
        <span className="absolute right-2.5 bottom-1 font-['Liberation_Sans',sans-serif] text-base leading-6 text-[#f2f2f2] [text-shadow:1px_1px_1px_#999]">
            https://blog.csdn.net/HelyZero
        </span>
    </footer>
);

const App = () => {
    const [activeTab, setActiveTab] = useState('开始');

    return (
        <div className="relative flex h-screen flex-col overflow-hidden bg-[#f1f1f1] font-['Noto_Sans_CJK_SC',sans-serif] text-black">
            <header className="shrink-0 border-t-2 border-[#a5b4d0] bg-linear-to-b from-[#4467a1] via-[#375996] via-70% to-[#335694]">
                <TitleBar />
                <TabBar active={activeTab} onChange={setActiveTab} />
            </header>
            <Ribbon />
            <UpdateBar />
            <div className="flex min-h-0 flex-1">
                <DocumentArea />
                <StylesPane />
            </div>
            <StatusBar />
            <svg className="pointer-events-none absolute right-[610px] bottom-[226px] z-20" width="430" height="320" viewBox="1840 1254 430 320" aria-hidden="true">
                <path d="M1849 1256L2239 1533L2245 1515L2268 1571L2207 1566L2223 1555L1842 1266C1838 1261 1843 1253 1849 1256Z" fill="#eb4949" />
            </svg>
        </div>
    );
};

export default App;
